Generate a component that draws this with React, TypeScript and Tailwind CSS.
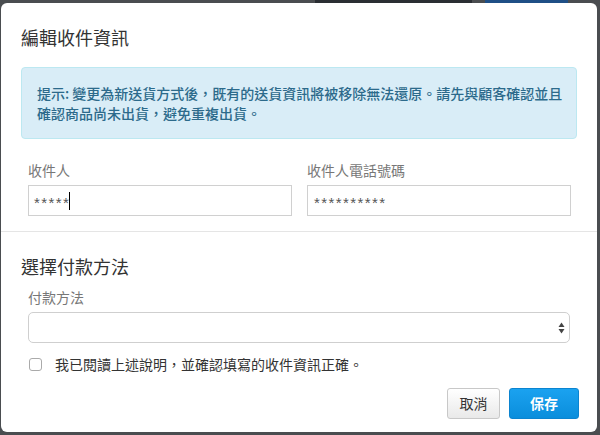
import React from "react";

const cjk = { fontFamily: '"Noto Sans CJK TC", "Noto Sans", sans-serif' };
const mono = { fontFamily: '"Liberation Sans", Arial, sans-serif' };

export default function App() {
  return (
    <div className="relative w-[600px] h-[435px] overflow-hidden bg-[#4a4d50]" style={cjk}>
      {/* background page peeking through at top */}
      <div className="absolute left-[315px] top-0 w-[157px] h-[3px] bg-[#2a2e33]" />
      <div className="absolute left-[485px] top-0 w-[83px] h-[3px] bg-[#1f4f86]" />

      <div className="relative ml-[1px] mt-[3px] w-[596px] h-[429px] rounded-[6px] bg-white flex flex-col">
        <div className="px-5 pt-[22px]">
          <h2 className="text-[18px] leading-[24px] text-[#333]">編輯收件資訊</h2>
        </div>

        <div className="mx-5 mt-[18px] rounded-[4px] border border-[#bce8f1] bg-[#d9edf7] pl-[15px] pr-[10px] py-[15px] text-[14px] leading-[20px] font-medium text-[#2c6a8b]">
          提示: 變更為新送貨方式後，既有的送貨資訊將被移除無法還原。請先與顧客確認並且
          <br />
          確認商品尚未出貨，避免重複出貨。
        </div>

        <div className="mt-[21px] pl-[27px] pr-[26px] grid grid-cols-2 gap-[15px]">
          <div className="flex flex-col">
            <label className="text-[14px] leading-[20px] text-[#777]">收件人</label>
            <div className="mt-[5px] h-[31px] border border-[#d0d0d0] bg-white flex items-center pl-[5px] text-[15px] text-[#555]" style={mono}>
              <span className="tracking-[1.4px] leading-[18px] translate-y-[2px]">*****</span>
              <span className="inline-block w-[1px] h-[18px] bg-black ml-[-1px]" />
            </div>
          </div>
          <div className="flex flex-col">
            <label className="text-[14px] leading-[20px] text-[#777]">收件人電話號碼</label>
            <div className="mt-[5px] h-[31px] border border-[#d0d0d0] bg-white flex items-center pl-[6px] text-[15px] text-[#555]" style={mono}>
              <span className="tracking-[1.4px] leading-[18px] translate-y-[2px]">**********</span>
            </div>
          </div>
        </div>

        <div className="mt-[15px] h-px bg-[#e5e5e5]" />

        <div className="px-5 mt-[22px]">
          <h3 className="text-[18px] leading-[24px] text-[#333]">選擇付款方法</h3>
        </div>

        <div className="pl-[27px] pr-[27px] mt-[9px] flex flex-col">
          <label className="text-[14px] leading-[20px] text-[#777]">付款方法</label>
          <div className="mt-[5px] h-[31px] rounded-[5px] border border-[#cfcfcf] bg-white flex items-center justify-end pr-[4px]">
            <svg width="7" height="12" viewBox="0 0 7 12">
              <path d="M3.5 0.5 L6.5 5 L0.5 5 Z" fill="#444" />
              <path d="M0.5 7 L6.5 7 L3.5 11.5 Z" fill="#444" />
            </svg>
          </div>

          <div className="mt-[11px] flex items-center h-[20px]">
            <span className="ml-[1px] w-[13px] h-[13px] rounded-[3px] border border-[#aaa] bg-white" />
            <span className="ml-[13px] text-[14px] leading-[20px] text-[#333]">
              我已閱讀上述說明，並確認填寫的收件資訊正確。
            </span>
          </div>
        </div>

        <div className="mt-[14px] pr-[18px] flex justify-end gap-[9px]">
          <button className="w-[53px] h-[31px] rounded-[3px] border border-[#c8c8c8] bg-gradient-to-b from-[#ffffff] to-[#e9e9e9] text-[14px] text-[#333]">
            取消
          </button>
          <button className="w-[70px] h-[31px] rounded-[3px] border border-[#0b84d0] bg-gradient-to-b from-[#1aa2f0] to-[#0a8edc] text-[14px] font-bold text-white">
            保存
          </button>
        </div>
      </div>
    </div>
  );
}
